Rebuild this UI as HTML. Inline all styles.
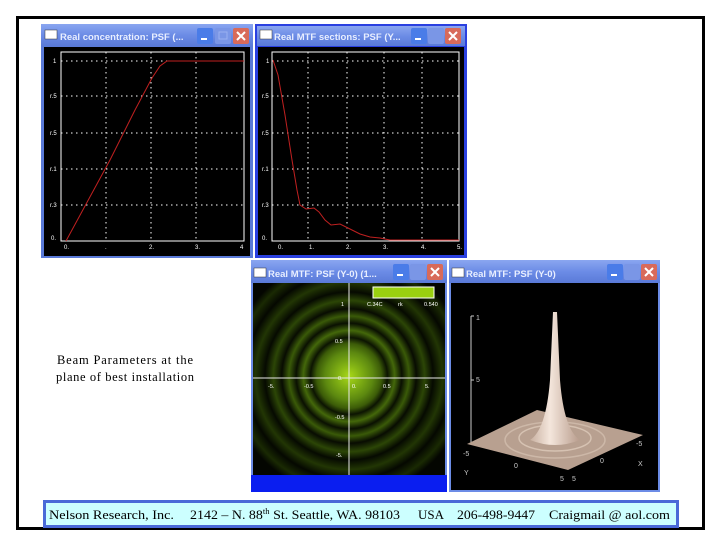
<!DOCTYPE html>
<html><head><meta charset="utf-8"><style>
html,body{margin:0;padding:0;background:#fff;width:720px;height:540px;overflow:hidden}
svg{display:block}
.s{font-family:"Liberation Sans",sans-serif}
.r{font-family:"Liberation Serif",serif}
</style></head><body>
<svg width="720" height="540" viewBox="0 0 720 540" xmlns="http://www.w3.org/2000/svg">
<defs>
<linearGradient id="tb" x1="0" y1="0" x2="0" y2="1"><stop offset="0" stop-color="#8aa6f0"/><stop offset="0.5" stop-color="#6c8ce6"/><stop offset="1" stop-color="#5a7ad8"/></linearGradient>
<radialGradient id="rg" cx="349" cy="376" r="120" gradientUnits="userSpaceOnUse">
<stop offset="0" stop-color="#a8d818"/>
<stop offset="0.1" stop-color="#80b014"/>
<stop offset="0.2" stop-color="#5c8810"/>
<stop offset="0.27" stop-color="#3c5c08"/>
<stop offset="0.32" stop-color="#0c1402"/>
<stop offset="0.38" stop-color="#44680a"/>
<stop offset="0.44" stop-color="#0a1002"/>
<stop offset="0.5" stop-color="#3a5a08"/>
<stop offset="0.56" stop-color="#080c02"/>
<stop offset="0.63" stop-color="#2c4606"/>
<stop offset="0.7" stop-color="#060a01"/>
<stop offset="0.78" stop-color="#223604"/>
<stop offset="0.86" stop-color="#050801"/>
<stop offset="0.94" stop-color="#1a2a03"/>
<stop offset="1" stop-color="#040601"/>
</radialGradient>
<linearGradient id="sp" x1="0" y1="0" x2="1" y2="0"><stop offset="0" stop-color="#c8b0a0"/><stop offset="0.4" stop-color="#f4e6dc"/><stop offset="1" stop-color="#b89c8c"/></linearGradient>
</defs>
<rect x="17.5" y="17.5" width="686" height="511" fill="none" stroke="#000" stroke-width="3"/>

<g class="s">
<rect x="41" y="24" width="212" height="234" fill="#5a7ad8"/>
<rect x="41" y="24" width="212" height="22" fill="url(#tb)"/>
<rect x="45" y="30" width="12" height="9" fill="#fff" stroke="#333" stroke-width="0.5"/>
<text x="60" y="40" font-size="9.5" font-weight="bold" fill="#e8eeff">Real concentration: PSF (...</text>
<rect x="197" y="28" width="16" height="16" rx="2" fill="#4a7ce8"/><rect x="201" y="38" width="6" height="2" fill="#fff"/>
<rect x="215" y="28" width="16" height="16" rx="2" fill="#7a96e6"/><rect x="219" y="32" width="8" height="7" fill="none" stroke="#9ab0f0"/>
<rect x="233" y="28" width="16" height="16" rx="2" fill="#d86a5a"/><path d="M237 32 L245 40 M245 32 L237 40" stroke="#fff" stroke-width="2"/>
<rect x="44" y="47" width="206" height="209" fill="#000"/>
<rect x="61" y="52" width="183" height="189" fill="none" stroke="#fff" stroke-width="1"/>
<g stroke="#fff" stroke-width="1" stroke-dasharray="1.5,3.5">
<path d="M106 52V241M151 52V241M196 52V241M61 61H244M61 96H244M61 133H244M61 169H244M61 205H244"/>
</g>
<g font-size="6" fill="#fff"><text x="53" y="63">1</text><text x="50" y="98">r.5</text><text x="50" y="135">r.5</text><text x="50" y="171">r.1</text><text x="50" y="207">r.3</text><text x="51" y="240">0.</text>
<text x="64" y="249">0.</text><text x="105" y="249">.</text><text x="149" y="249">2.</text><text x="195" y="249">3.</text><text x="240" y="249">4</text></g>
<path d="M66 241 L110 160 L135 110 L152 78 L160 66 L167 61 L244 61" fill="none" stroke="#c02020" stroke-width="1"/>

<rect x="255" y="24" width="212" height="234" fill="#2a40e0"/>
<rect x="257" y="26" width="208" height="20" fill="url(#tb)"/>
<rect x="260" y="30" width="12" height="9" fill="#fff" stroke="#333" stroke-width="0.5"/>
<text x="274" y="40" font-size="9.5" font-weight="bold" fill="#e8eeff">Real MTF sections: PSF (Y...</text>
<rect x="411" y="28" width="16" height="16" rx="2" fill="#4a7ce8"/><rect x="415" y="38" width="6" height="2" fill="#fff"/>
<rect x="428" y="28" width="16" height="16" rx="2" fill="#7a96e6"/>
<rect x="445" y="28" width="16" height="16" rx="2" fill="#d86a5a"/><path d="M449 32 L457 40 M457 32 L449 40" stroke="#fff" stroke-width="2"/>
<rect x="258" y="47" width="206" height="208" fill="#000"/>
<rect x="272" y="52" width="187" height="189" fill="none" stroke="#fff" stroke-width="1"/>
<g stroke="#fff" stroke-width="1" stroke-dasharray="1.5,3.5">
<path d="M308 52V241M347 52V241M384 52V241M422 52V241M272 61H459M272 96H459M272 133H459M272 169H459M272 205H459"/>
</g>
<g font-size="6" fill="#fff"><text x="266" y="63">1</text><text x="262" y="98">r.5</text><text x="262" y="135">r.5</text><text x="262" y="171">r.1</text><text x="262" y="207">r.3</text><text x="262" y="240">0.</text>
<text x="278" y="249">0.</text><text x="309" y="249">1.</text><text x="346" y="249">2.</text><text x="383" y="249">3.</text><text x="421" y="249">4.</text><text x="457" y="249">5.</text></g>
<path d="M273 60 L278 75 L285 115 L292 160 L297 190 L300 205 L306 209 L314 208 L319 212 L325 220 L331 225 L340 224 L350 229 L360 234 L370 237 L380 238 L390 240 L459 240" fill="none" stroke="#c02020" stroke-width="1"/>

<rect x="251" y="260" width="196" height="232" fill="#6c8ce6"/>
<rect x="251" y="260" width="196" height="23" fill="url(#tb)"/>
<rect x="254" y="268" width="12" height="9" fill="#fff" stroke="#333" stroke-width="0.5"/>
<text x="268" y="277" font-size="9.5" font-weight="bold" fill="#e8eeff">Real MTF: PSF (Y-0) (1...</text>
<rect x="393" y="264" width="16" height="16" rx="2" fill="#4a7ce8"/><rect x="397" y="274" width="6" height="2" fill="#fff"/>
<rect x="410" y="264" width="16" height="16" rx="2" fill="#7a96e6"/>
<rect x="427" y="264" width="16" height="16" rx="2" fill="#d86a5a"/><path d="M431 268 L439 276 M439 268 L431 276" stroke="#fff" stroke-width="2"/>
<rect x="253" y="283" width="192" height="192" fill="url(#rg)"/>
<rect x="251" y="475" width="196" height="17" fill="#0a1ef0"/>
<rect x="373" y="287" width="61" height="11" fill="#9ad010" stroke="#fff" stroke-width="1"/>
<g font-size="5.5" fill="#fff"><text x="367" y="306">C.34C</text><text x="398" y="306">rk</text><text x="424" y="306">0.540</text>
<text x="341" y="306">1</text><text x="335" y="343">0.5</text><text x="338" y="380">0.</text><text x="335" y="419">-0.5</text><text x="336" y="457">-5.</text>
<text x="268" y="388">-5.</text><text x="304" y="388">-0.5</text><text x="352" y="388">0.</text><text x="383" y="388">0.5</text><text x="425" y="388">5.</text></g>
<path d="M349 283V475M253 378H445" stroke="#e8e8e8" stroke-width="1"/>

<rect x="449" y="260" width="211" height="232" fill="#6c8ce6"/>
<rect x="449" y="260" width="211" height="23" fill="url(#tb)"/>
<rect x="452" y="268" width="12" height="9" fill="#fff" stroke="#333" stroke-width="0.5"/>
<text x="466" y="277" font-size="9.5" font-weight="bold" fill="#e8eeff">Real MTF: PSF (Y-0)</text>
<rect x="607" y="264" width="16" height="16" rx="2" fill="#4a7ce8"/><rect x="611" y="274" width="6" height="2" fill="#fff"/>
<rect x="624" y="264" width="16" height="16" rx="2" fill="#7a96e6"/>
<rect x="641" y="264" width="16" height="16" rx="2" fill="#d86a5a"/><path d="M645 268 L653 276 M653 268 L645 276" stroke="#fff" stroke-width="2"/>
<rect x="451" y="283" width="207" height="207" fill="#000"/>
<path d="M471 316V443M471 316H474M471 380H474" stroke="#ccc" stroke-width="1" fill="none"/>
<polygon points="467,444 537,410 643,435 568,470" fill="#b8a090"/>
<ellipse cx="555" cy="440" rx="50" ry="18" fill="none" stroke="#cdb8a8" stroke-width="1.5"/>
<ellipse cx="555" cy="438" rx="36" ry="13" fill="none" stroke="#d6c2b2" stroke-width="1.5"/>
<path d="M530 440 Q546 430 550 380 L553 312 L557 312 L560 380 Q564 430 580 440 Q555 450 530 440 Z" fill="url(#sp)"/>
<g font-size="7" fill="#ccc"><text x="476" y="320">1</text><text x="476" y="382">5</text><text x="463" y="456">-5</text><text x="514" y="468">0</text><text x="560" y="481">5</text><text x="572" y="481">5</text><text x="464" y="475">Y</text><text x="636" y="446">-5</text><text x="600" y="463">0</text><text x="638" y="466">X</text></g>
</g>

<text class="r" x="125" y="364" font-size="12.5" fill="#000" text-anchor="middle" textLength="136" lengthAdjust="spacing">Beam Parameters at the</text>
<text class="r" x="125" y="381" font-size="12.5" fill="#000" text-anchor="middle" textLength="138" lengthAdjust="spacing">plane of best installation</text>

<rect x="44.5" y="501.5" width="633" height="25" fill="#ccffff" stroke="#4a6ad8" stroke-width="3"/>
<g class="r" font-size="13" fill="#000">
<text x="49" y="519" textLength="125" lengthAdjust="spacingAndGlyphs">Nelson Research, Inc.</text>
<text x="190" y="519" textLength="210" lengthAdjust="spacingAndGlyphs">2142 – N. 88<tspan font-size="8" dy="-5">th</tspan><tspan dy="5"> St. Seattle, WA. 98103</tspan></text>
<text x="418" y="519" textLength="26" lengthAdjust="spacingAndGlyphs">USA</text>
<text x="457" y="519" textLength="78" lengthAdjust="spacingAndGlyphs">206-498-9447</text>
<text x="549" y="519" textLength="121" lengthAdjust="spacingAndGlyphs">Craigmail @ aol.com</text>
</g>
</svg>
</body></html>
